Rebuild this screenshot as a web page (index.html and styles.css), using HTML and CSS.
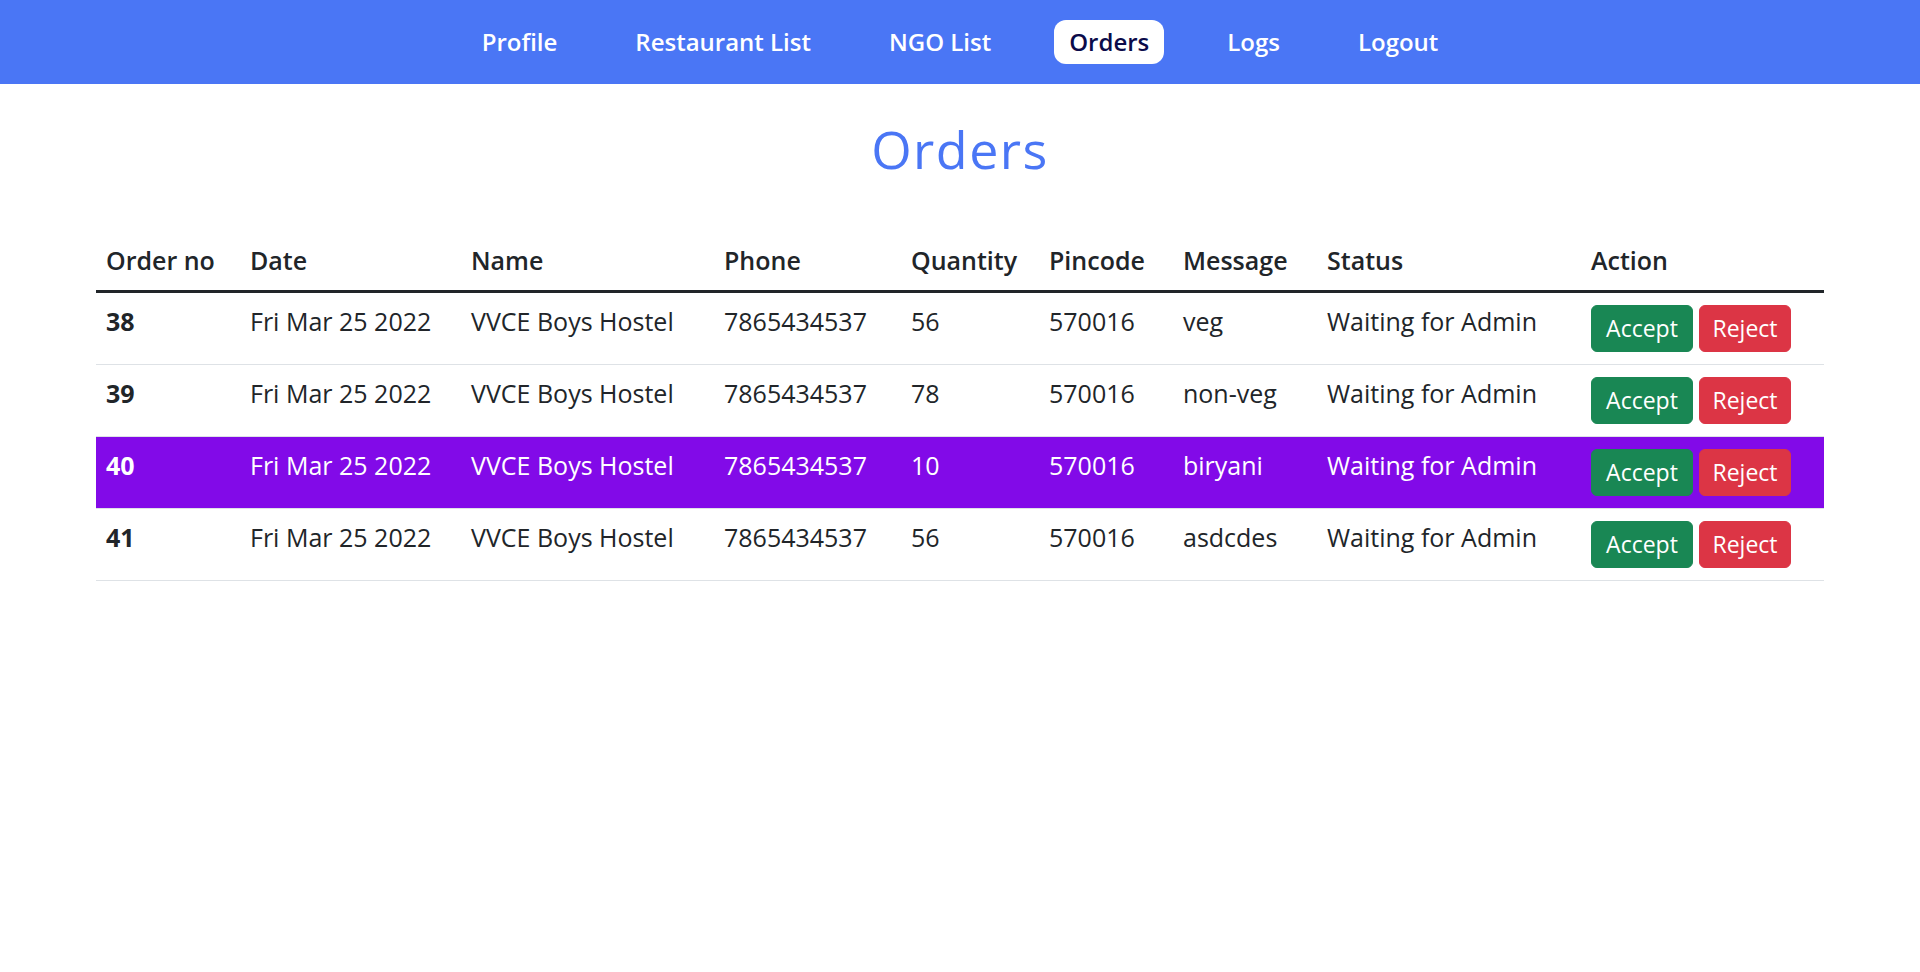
FILE: index.html
```html
<!DOCTYPE html>
<html lang="en">
<head>
<meta charset="utf-8">
<title>Orders</title>
<link rel="stylesheet" href="styles.css">
</head>
<body>
<nav class="topnav">
  <a class="nav-item" href="#">Profile</a>
  <a class="nav-item" href="#">Restaurant List</a>
  <a class="nav-item" href="#">NGO List</a>
  <a class="nav-item active" href="#">Orders</a>
  <a class="nav-item" href="#">Logs</a>
  <a class="nav-item" href="#">Logout</a>
</nav>
<main class="content">
  <h1 class="page-title">Orders</h1>
  <table class="orders">
    <colgroup>
      <col class="c-no"><col class="c-date"><col class="c-name"><col class="c-phone"><col class="c-qty"><col class="c-pin"><col class="c-msg"><col class="c-status"><col class="c-action">
    </colgroup>
    <thead>
      <tr>
        <th>Order no</th><th>Date</th><th>Name</th><th>Phone</th><th>Quantity</th><th>Pincode</th><th>Message</th><th>Status</th><th>Action</th>
      </tr>
    </thead>
    <tbody>
      <tr>
        <th class="rowno">38</th><td>Fri Mar 25 2022</td><td>VVCE Boys Hostel</td><td>7865434537</td><td>56</td><td>570016</td><td>veg</td><td>Waiting for Admin</td>
        <td class="actions"><button class="btn btn-accept">Accept</button><button class="btn btn-reject">Reject</button></td>
      </tr>
      <tr>
        <th class="rowno">39</th><td>Fri Mar 25 2022</td><td>VVCE Boys Hostel</td><td>7865434537</td><td>78</td><td>570016</td><td>non-veg</td><td>Waiting for Admin</td>
        <td class="actions"><button class="btn btn-accept">Accept</button><button class="btn btn-reject">Reject</button></td>
      </tr>
      <tr class="highlight">
        <th class="rowno">40</th><td>Fri Mar 25 2022</td><td>VVCE Boys Hostel</td><td>7865434537</td><td>10</td><td>570016</td><td>biryani</td><td>Waiting for Admin</td>
        <td class="actions"><button class="btn btn-accept">Accept</button><button class="btn btn-reject">Reject</button></td>
      </tr>
      <tr>
        <th class="rowno">41</th><td>Fri Mar 25 2022</td><td>VVCE Boys Hostel</td><td>7865434537</td><td>56</td><td>570016</td><td>asdcdes</td><td>Waiting for Admin</td>
        <td class="actions"><button class="btn btn-accept">Accept</button><button class="btn btn-reject">Reject</button></td>
      </tr>
    </tbody>
  </table>
</main>
</body>
</html>
```
FILE: styles.css
```css
* { box-sizing: border-box; }
html, body { margin: 0; padding: 0; }
body {
  font-family: "Open Sans", "Noto Sans", sans-serif;
  color: #212529;
  background: #fff;
}
.topnav {
  height: 84px;
  background: #4a76f5;
  display: flex;
  align-items: center;
  justify-content: center;
  gap: 48px;
}
.nav-item {
  display: block;
  height: 44px;
  line-height: 44px;
  padding: 0 15px;
  border-radius: 12px;
  color: #fff;
  font-size: 24px;
  font-weight: 600;
  text-decoration: none;
}
.nav-item.active {
  background: #fff;
  color: #0b0b4a;
}
.content {
  width: 90%;
  margin: 0 auto;
}
.page-title {
  margin: 34px 0 52px;
  text-align: center;
  font-size: 52px;
  line-height: 1.2;
  font-weight: 500;
  letter-spacing: 1.5px;
  color: #4a76f5;
}
.orders {
  width: 100%;
  border-collapse: collapse;
  table-layout: fixed;
  font-size: 25px;
  line-height: 1.5;
  vertical-align: top;
}
.c-no { width: 144px; }
.c-date { width: 221px; }
.c-name { width: 253px; }
.c-phone { width: 187px; }
.c-qty { width: 138px; }
.c-pin { width: 134px; }
.c-msg { width: 144px; }
.c-status { width: 264px; }
.c-action { width: 243px; }
.orders th, .orders td {
  padding: 10px;
  text-align: left;
  vertical-align: top;
  white-space: nowrap;
}
.orders thead th {
  font-weight: 600;
  border-bottom: 3px solid #212529;
}
.orders tbody tr {
  border-bottom: 1px solid #dee2e6;
}
.orders tbody td, .orders tbody th {
  font-weight: 400;
}
.orders tbody th.rowno { font-weight: 700; }
.orders td.actions {
  padding: 12px 10px;
  display: flex;
  gap: 6px;
}
.highlight {
  background: #820ae8;
  color: #fff;
}
.btn {
  height: 47px;
  border: 1px solid transparent;
  border-radius: 6px;
  color: #fff;
  font-family: inherit;
  font-size: 23px;
  line-height: 30px;
  padding: 0;
  text-align: center;
  cursor: pointer;
}
.btn-accept { width: 102px; background: #198754; border-color: #198754; }
.btn-reject { width: 92px; background: #dc3545; border-color: #dc3545; }
```
